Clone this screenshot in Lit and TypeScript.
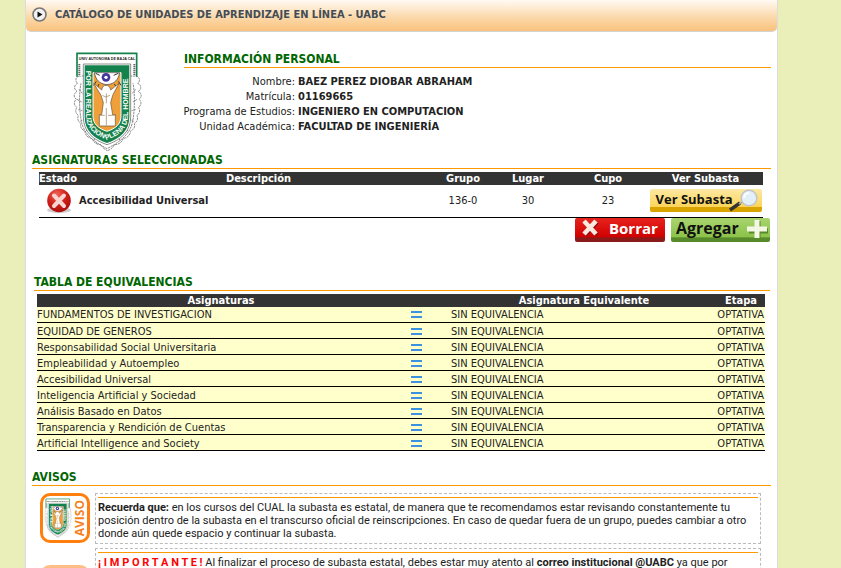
import { LitElement, html, css } from "lit";
import { customElement, property } from "lit/decorators.js";

const base = css`
  * { box-sizing: border-box; }
  svg { display: block; }
`;

@customElement("uabc-emblem")
class UabcEmblem extends LitElement {
  static styles = [base, css`
    :host { display: block; }
    svg { width: 100%; height: 100%; }
    .motto { font: bold 21px "Liberation Sans", sans-serif; fill: #fff; }
    .name { font: bold 11px "Liberation Sans", sans-serif; fill: #222; }
  `];

  render() {
    return html`<svg viewBox="15 15 225 303" role="img" aria-label="Escudo UABC">
      <g fill="#fff" stroke="#8d8d8d" stroke-width="3" stroke-dasharray="7 2">
        <path d="M42 90c-14 6-10 18-4 22-14 6-10 20-2 24-12 8-10 18-2 24-10 8-6 20 2 24-8 10-2 20 4 24-4 12 0 20 8 24-4 12 4 20 12 24 0 14 12 20 22 22 4 14 16 18 26 18 4 10 14 16 20 18 6-2 16-8 20-18 10 0 22-4 26-18 10-2 22-8 22-22 8-4 16-12 12-24 8-4 12-12 8-24 6-4 12-14 4-24 8-4 12-16 2-24 8-6 10-16-2-24 8-4 12-18-2-24 6-4 10-16-4-22z"/>
        <path d="M48 112c-6 30-6 80 2 118 8 34 34 56 76 78 42-22 68-44 76-78s8-88 2-118" fill="none"/>
        <path d="M42 130l10 12M36 160l14 8M40 190l12 4M46 226l12-6M62 256l12-10M86 284l8-12M212 130l-10 12M216 160l-12 8M212 190l-12 4M206 226l-12-6M190 256l-12-10M166 284l-8-12" fill="none"/>
      </g>
      <path d="M33 20h185v70h-14V50H49v40H33z" fill="#fff"/>
      <path d="M36 92V22h179v70" fill="none" stroke="#14824c" stroke-width="5"/>
      <path d="M43 88V54m165 34V54" stroke="#333" stroke-width="6" stroke-dasharray="3 3"/>
      <text class="name" x="126" y="43" text-anchor="middle">UNIV AUTONOMA DE BAJA CAL</text>
      <path d="M55 54h142v158c0 46-30 70-71 84-41-14-71-38-71-84z" fill="#fff" stroke="#555" stroke-width="2"/>
      <path d="M59 58h134v154c0 42-28 66-67 79-39-13-67-37-67-79z" fill="#14824c"/>
      <path d="M84 80h84v130c0 24-16 38-42 46-26-8-42-22-42-46z" fill="#f0a03a" stroke="#fff" stroke-width="3"/>
      <path d="M88 80h76c-4 20-14 34-38 36-24-2-34-16-38-36z" fill="#fff" stroke="#333" stroke-width="2"/>
      <path d="M94 106l-8 12m16-4l-6 12m52-12l8 12m4-20l8 12M104 88l-12-6m54 6l14-6" stroke="#333" stroke-width="3"/>
      <circle cx="123" cy="94" r="13" fill="#44389c"/><circle cx="123" cy="94" r="5" fill="#fff"/>
      <path d="M86 112l24 20c2-10 6-14 13-14s12 4 14 14l25-20-19 36-6 22 6 36h8v34h-48v-34h7l5-36-7-22z" fill="#fff" stroke="#655036" stroke-width="2"/>
      <path d="M124 142v30m0 14v52M105 208h14m10 0h20M112 148l10 5 13-5" stroke="#9a7a50" stroke-width="2" fill="none"/>
      <path id="motto" d="M64 66V212C64 246 88 268 126 281C164 268 188 246 188 212V62" fill="none"/>
      <text class="motto"><textPath href="#motto" startOffset="8">POR LA REALIZACION PLENA DEL HOMBRE</textPath></text>
    </svg>`;
  }
}

@customElement("aviso-icon")
class AvisoIcon extends LitElement {
  static styles = [base, css`
    :host { display: flex; width: 50px; height: 50px; border: 3px solid #ff7f0e; border-radius: 10px;
      box-sizing: border-box; background: #fff; align-items: center; }
    uabc-emblem { width: 30px; height: 40px; flex: none; }
    .word { writing-mode: vertical-rl; transform: rotate(180deg); color: #f58220;
      font: bold 12px/14px "Open Sans", "Noto Sans", sans-serif; }
  `];
  render() {
    return html`<uabc-emblem></uabc-emblem><span class="word">AVISO</span>`;
  }
}

@customElement("section-title")
class SectionTitle extends LitElement {
  @property() text = "";
  static styles = css`
    :host { display: block; border-bottom: 1px solid #f90; }
    h2 { margin: 0; height: 16px; color: #060; white-space: nowrap;
      font: bold 12px/16px "DejaVu Sans Condensed", "DejaVu Sans", Tahoma, sans-serif; }
  `;
  render() { return html`<h2>${this.text}</h2>`; }
}

const persona = [
  ["Nombre:", "BAEZ PEREZ DIOBAR ABRAHAM"],
  ["Matrícula:", "01169665"],
  ["Programa de Estudios:", "INGENIERO EN COMPUTACION"],
  ["Unidad Académica:", "FACULTAD DE INGENIERÍA"],
];

const materias = [
  "FUNDAMENTOS DE INVESTIGACION", "EQUIDAD DE GENEROS", "Responsabilidad Social Universitaria",
  "Empleabilidad y Autoempleo", "Accesibilidad Universal", "Inteligencia Artificial y Sociedad",
  "Análisis Basado en Datos", "Transparencia y Rendición de Cuentas", "Artificial Intelligence and Society",
];

@customElement("app-root")
class AppRoot extends LitElement {
  static styles = [base, css`
    :host { display: block; height: 100vh; overflow: hidden; background: #eaefb9; color: #222;
      font: 11px/13px "DejaVu Sans Condensed", "DejaVu Sans", Tahoma, sans-serif; }
    .page { margin: 0 63px 0 25px; min-height: 100%; background: #fff;
      border: solid #dcdcdc; border-width: 0 1px; }
    .bar { display: flex; align-items: center; gap: 8px; height: 32px; padding: 0 6px 3px;
      background: linear-gradient(#fffaf3, #fbd9ab 55%, #f9c27c); border-bottom: 1px solid #d3d3d3;
      border-radius: 0 0 5px 5px; }
    .bar h1 { margin: 0; font: inherit; font-weight: bold; color: #444c55; white-space: nowrap; }
    .body { padding: 19px 6px 0; }
    .person { display: flex; gap: 39px; padding-left: 38px; }
    .person uabc-emblem { width: 75px; height: 101px; flex: none; }
    .info { flex: 1; }
    dl { margin: 6px 0 0; display: grid; grid-template-columns: 111px 1fr; column-gap: 3px; line-height: 15px; }
    dt { text-align: right; white-space: nowrap; justify-self: end; }
    dd { margin: 0; font-weight: bold; }
    table { border-collapse: collapse; table-layout: fixed; width: 100%; }
    th { background: #333; color: #fff; padding: 0; height: 13px; line-height: 13px; white-space: nowrap; }
    td { padding: 0; white-space: nowrap; }
    .picked { padding: 3px 8px 0 7px; }
    .picked td { height: 32px; border-bottom: 1px solid #000; text-align: center; }
    .picked .left, th.left { text-align: left; }
    .picked td svg { margin: 0 auto; }
    .c-state { width: 40px; } .c-group { width: 50px; } .c-num { width: 80px; } .c-view { width: 115px; }
    .c-eq { width: 46px; } .c-equiv { width: 266px; } .c-stage { width: 48px; }
    button { display: inline-flex; align-items: center; border: 0; border-radius: 2px; margin: 0;
      height: 24px; font: bold 15px/18px "Open Sans", "Noto Sans", sans-serif; white-space: nowrap; }
    .picked .view { width: 112px; height: 23px; padding: 0 0 4px 6px; color: #111; font-size: 13px; position: relative;
      background: linear-gradient(#fde9a4, #fcd458 78%, #d9a300 80%, #d9a300); vertical-align: middle; }
    .view svg { position: absolute; right: 2px; top: 0; }
    .actions { display: flex; justify-content: flex-end; gap: 6px; padding-right: 1px; height: 24px; }
    .del { width: 90px; padding: 0 0 3px 6px; gap: 9px; color: #fff;
      background: linear-gradient(#e8231d, #cf0000 80%, #8b1a1a 82%, #8b1a1a); }
    .add { width: 99px; padding: 0 0 3px 5px; gap: 7px; color: #111; font-size: 16px;
      background: linear-gradient(#a9d46f, #8bc34a 80%, #568a2b 82%, #568a2b); }
    .del svg, .add svg { flex: none; }
    .equiv { margin: 32px 1px 0 2px; }
    .equiv .wrap { padding: 3px 5px 0 3px; }
    .equiv td { height: 16px; padding-top: 1px; background: #ffc; border-bottom: 1px solid #000; }
    .equiv .stage { text-align: right; padding-right: 1px; }
    .equiv svg { margin-left: 6px; }
    .notices { margin-top: 18px; }
    .notice { display: flex; gap: 5px; padding: 0 10px 0 8px; margin-top: 7px; }
    .notice + .notice { margin-top: 4px; }
    .box { flex: 1; min-height: 51px; border: 1px dashed #bbb; padding: 3px 2px; }
    .box p { margin: 0; border-top: 1px solid #f90; padding-top: 3px; font-family: Roboto, Tahoma, sans-serif; }
    aviso-icon { flex: none; }
    .second aviso-icon { margin-top: 17px; opacity: .5; }
    .alert { color: #f00; font-weight: bold; }
  `];

  render() {
    return html`<main class="page">
      <header class="bar">
        <svg width="15" height="15" viewBox="0 0 15 15" aria-hidden="true">
          <circle cx="7.5" cy="7.5" r="6.5" fill="#f2f2f2" stroke="#777" stroke-width="1.6"/>
          <path d="M5.5 4.5l5 3-5 3z" fill="#111"/></svg>
        <h1>CATÁLOGO DE UNIDADES DE APRENDIZAJE EN LÍNEA - UABC</h1>
      </header>
      <div class="body">
        <section class="person">
          <uabc-emblem></uabc-emblem>
          <div class="info">
            <section-title text="INFORMACIÓN PERSONAL"></section-title>
            <dl>${persona.map(([k, v]) => html`<dt>${k}</dt><dd>${v}</dd>`)}</dl>
          </div>
        </section>
        <section>
          <section-title text="ASIGNATURAS SELECCIONADAS"></section-title>
          <div class="picked"><table>
            <colgroup><col class="c-state"><col><col class="c-group"><col class="c-num"><col class="c-num"><col class="c-view"></colgroup>
            <thead><tr><th class="left">Estado</th><th>Descripción</th><th>Grupo</th><th>Lugar</th><th>Cupo</th><th>Ver Subasta</th></tr></thead>
            <tbody><tr>
              <td><svg width="26" height="26" viewBox="0 0 26 26" role="img" aria-label="No asignada">
                <defs><radialGradient id="r" cx=".4" cy=".25" r=".8"><stop offset="0" stop-color="#f0675c"/><stop offset=".5" stop-color="#cf2018"/><stop offset="1" stop-color="#a80c0c"/></radialGradient></defs>
                <ellipse cx="13" cy="22" rx="12" ry="3" fill="#ccc"/><circle cx="13" cy="12.5" r="11.8" fill="url(#r)"/>
                <path d="M8 7.5l10 10.5M18 7.5L8 18" stroke="#f9d5d2" stroke-width="4" stroke-linecap="round"/></svg></td>
              <td class="left"><b>Accesibilidad Universal</b></td><td>136-0</td><td>30</td><td>23</td>
              <td><button class="view" type="button">Ver Subasta
                <svg width="32" height="24" viewBox="0 0 32 24" aria-hidden="true">
                  <path d="M2 21l10-7" stroke="#333" stroke-width="3.4"/><path d="M11 15l5-3" stroke="#aaa" stroke-width="2"/>
                  <circle cx="21" cy="9" r="7.8" fill="#e3f0fa" stroke="#c0c4c8" stroke-width="1.4"/>
                  <path d="M16 9a5 5 0 015-5" stroke="#fff" stroke-width="2" fill="none"/></svg></button></td>
            </tr></tbody>
          </table></div>
          <div class="actions">
            <button class="del" type="button"><svg width="19" height="20" viewBox="0 0 19 20" aria-hidden="true">
              <path d="M4 4l12 13M16 4L4 17" stroke="#8b1010" stroke-width="4.5"/>
              <path d="M3 3l12 13M15 3L3 16" stroke="#fbe9e0" stroke-width="4.6"/></svg>Borrar</button>
            <button class="add" type="button">Agregar<svg width="22" height="21" viewBox="0 0 22 21" aria-hidden="true">
              <path d="M12 3v18M3 13h19" stroke="#568a2b" stroke-width="5"/>
              <path d="M11 2v18M1 11h20" stroke="#f4f7e4" stroke-width="5"/></svg></button>
          </div>
        </section>
        <section class="equiv">
          <section-title text="TABLA DE EQUIVALENCIAS"></section-title>
          <div class="wrap"><table>
            <colgroup><col><col class="c-eq"><col class="c-equiv"><col class="c-stage"></colgroup>
            <thead><tr><th>Asignaturas</th><th></th><th>Asignatura Equivalente</th><th>Etapa</th></tr></thead>
            <tbody>${materias.map((m) => html`<tr><td>${m}</td>
              <td><svg width="11" height="7" viewBox="0 0 11 7" role="img" aria-label="equivale a"><path d="M0 1h11M0 6h11" stroke="#3c92dc" stroke-width="2"/></svg></td>
              <td>SIN EQUIVALENCIA</td><td class="stage">OPTATIVA</td></tr>`)}</tbody>
          </table></div>
        </section>
        <section class="notices">
          <section-title text="AVISOS"></section-title>
          <div class="notice"><aviso-icon></aviso-icon>
            <div class="box"><p><b>Recuerda que:</b> en los cursos del CUAL la subasta es estatal, de manera que te recomendamos estar revisando constantemente tu posición dentro de la subasta en el transcurso oficial de reinscripciones. En caso de quedar fuera de un grupo, puedes cambiar a otro donde aún quede espacio y continuar la subasta.</p></div></div>
          <div class="notice second"><aviso-icon></aviso-icon>
            <div class="box"><p><span class="alert">¡ I M P O R T A N T E !</span> Al finalizar el proceso de subasta estatal, debes estar muy atento al <b>correo institucional @UABC</b> ya que por</p></div></div>
        </section>
      </div>
    </main>`;
  }
}
